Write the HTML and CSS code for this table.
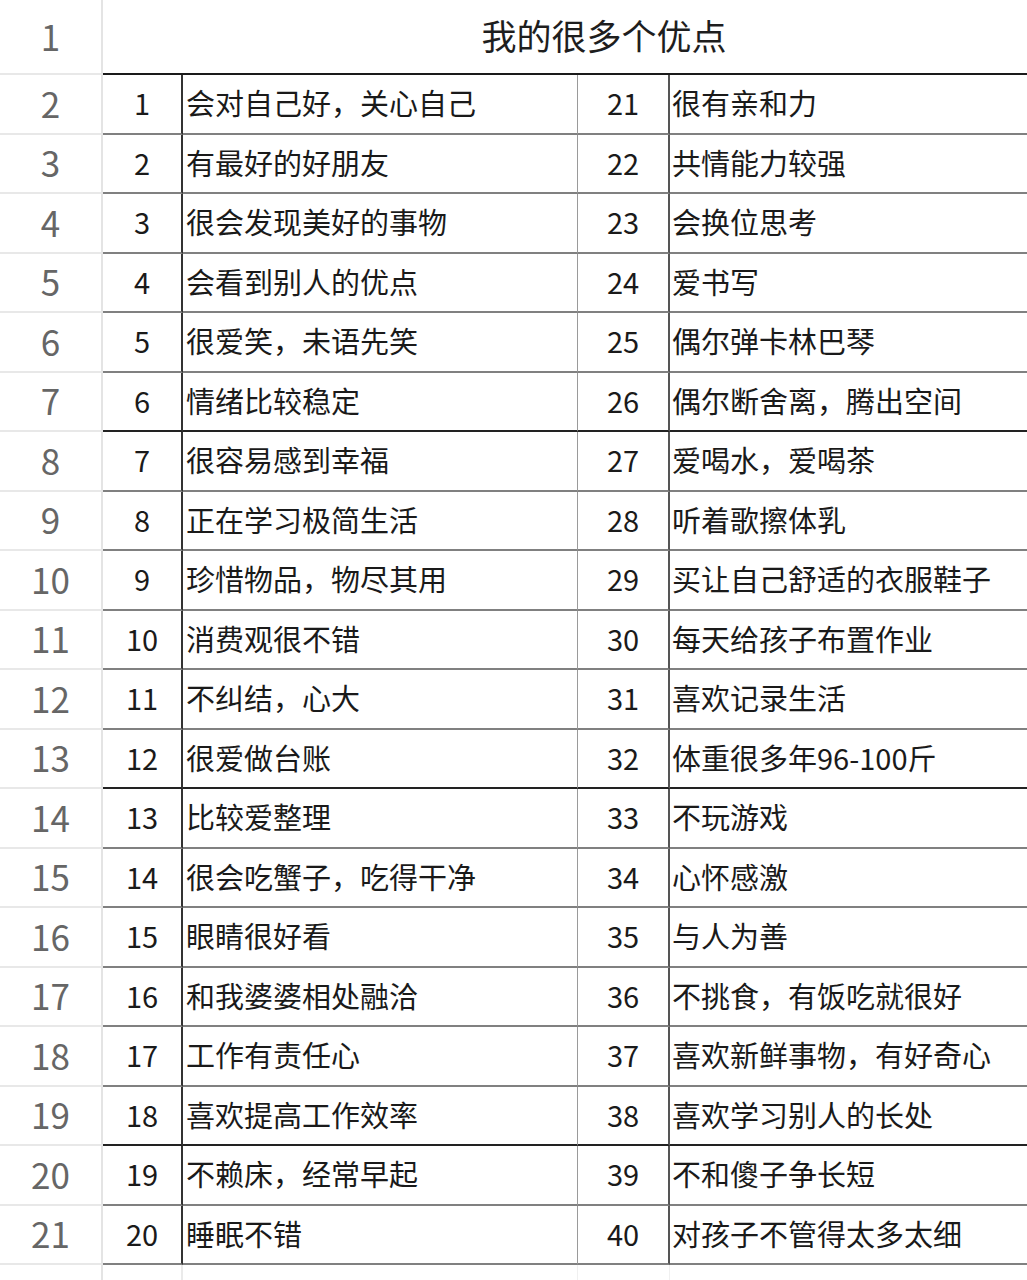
FILE: index.html
```html
<!DOCTYPE html>
<html lang="zh-CN">
<head>
<meta charset="utf-8">
<title>我的很多个优点</title>
<link rel="stylesheet" href="styles.css">
</head>
<body>
<div class="sheet">
  <div class="row head">
    <div class="rn">1</div>
    <div class="title">我的很多个优点</div>
  </div>
  <div class="row"><div class="rn">2</div><div class="c a">1</div><div class="c b">会对自己好，关心自己</div><div class="c n2">21</div><div class="c d">很有亲和力</div></div>
  <div class="row"><div class="rn">3</div><div class="c a">2</div><div class="c b">有最好的好朋友</div><div class="c n2">22</div><div class="c d">共情能力较强</div></div>
  <div class="row"><div class="rn">4</div><div class="c a">3</div><div class="c b">很会发现美好的事物</div><div class="c n2">23</div><div class="c d">会换位思考</div></div>
  <div class="row"><div class="rn">5</div><div class="c a">4</div><div class="c b">会看到别人的优点</div><div class="c n2">24</div><div class="c d">爱书写</div></div>
  <div class="row"><div class="rn">6</div><div class="c a">5</div><div class="c b">很爱笑，未语先笑</div><div class="c n2">25</div><div class="c d">偶尔弹卡林巴琴</div></div>
  <div class="row strong"><div class="rn">7</div><div class="c a">6</div><div class="c b">情绪比较稳定</div><div class="c n2">26</div><div class="c d">偶尔断舍离，腾出空间</div></div>
  <div class="row"><div class="rn">8</div><div class="c a">7</div><div class="c b">很容易感到幸福</div><div class="c n2">27</div><div class="c d">爱喝水，爱喝茶</div></div>
  <div class="row"><div class="rn">9</div><div class="c a">8</div><div class="c b">正在学习极简生活</div><div class="c n2">28</div><div class="c d">听着歌擦体乳</div></div>
  <div class="row"><div class="rn">10</div><div class="c a">9</div><div class="c b">珍惜物品，物尽其用</div><div class="c n2">29</div><div class="c d">买让自己舒适的衣服鞋子</div></div>
  <div class="row"><div class="rn">11</div><div class="c a">10</div><div class="c b">消费观很不错</div><div class="c n2">30</div><div class="c d">每天给孩子布置作业</div></div>
  <div class="row"><div class="rn">12</div><div class="c a">11</div><div class="c b">不纠结，心大</div><div class="c n2">31</div><div class="c d">喜欢记录生活</div></div>
  <div class="row strong"><div class="rn">13</div><div class="c a">12</div><div class="c b">很爱做台账</div><div class="c n2">32</div><div class="c d">体重很多年96-100斤</div></div>
  <div class="row"><div class="rn">14</div><div class="c a">13</div><div class="c b">比较爱整理</div><div class="c n2">33</div><div class="c d">不玩游戏</div></div>
  <div class="row"><div class="rn">15</div><div class="c a">14</div><div class="c b">很会吃蟹子，吃得干净</div><div class="c n2">34</div><div class="c d">心怀感激</div></div>
  <div class="row"><div class="rn">16</div><div class="c a">15</div><div class="c b">眼睛很好看</div><div class="c n2">35</div><div class="c d">与人为善</div></div>
  <div class="row"><div class="rn">17</div><div class="c a">16</div><div class="c b">和我婆婆相处融洽</div><div class="c n2">36</div><div class="c d">不挑食，有饭吃就很好</div></div>
  <div class="row"><div class="rn">18</div><div class="c a">17</div><div class="c b">工作有责任心</div><div class="c n2">37</div><div class="c d">喜欢新鲜事物，有好奇心</div></div>
  <div class="row strong"><div class="rn">19</div><div class="c a">18</div><div class="c b">喜欢提高工作效率</div><div class="c n2">38</div><div class="c d">喜欢学习别人的长处</div></div>
  <div class="row"><div class="rn">20</div><div class="c a">19</div><div class="c b">不赖床，经常早起</div><div class="c n2">39</div><div class="c d">不和傻子争长短</div></div>
  <div class="row"><div class="rn">21</div><div class="c a">20</div><div class="c b">睡眠不错</div><div class="c n2">40</div><div class="c d">对孩子不管得太多太细</div></div>
  <div class="row empty"><div class="rn"></div><div class="e a"></div><div class="e b"></div><div class="e n2"></div><div class="e d"></div></div>
</div>
</body>
</html>
```

FILE: styles.css
```css
* { box-sizing: border-box; }
html, body { margin: 0; padding: 0; background: #fff; }
body {
  font-family: "Noto Sans CJK SC", "Noto Sans", sans-serif;
  color: #1a1a1a;
  width: 1027px;
  height: 1280px;
  overflow: hidden;
}
.sheet { display: flex; flex-direction: column; }
.row {
  display: grid;
  grid-template-columns: 103px 80px 395px 92px 357px;
  height: 59.5px;
}
.row.head { height: 75px; grid-template-columns: 103px 924px; }
.rn {
  display: flex;
  align-items: center;
  justify-content: center;
  font-size: 35px;
  font-weight: 400;
  color: #666;
  border-right: 2px solid #e4e4e4;
  border-bottom: 2px solid #e8e8e8;
  padding-bottom: 3px;
}
.title {
  display: flex;
  align-items: center;
  justify-content: center;
  padding-left: 78px;
  padding-bottom: 4px;
  font-size: 35px;
  color: #1e1e1e;
  border-bottom: 2px solid #1a1a1a;
}
.c {
  display: flex;
  align-items: center;
  font-size: 29px;
  border-bottom: 2px solid #808080;
  white-space: nowrap;
  padding-bottom: 3px;
}
.row.strong .c { border-bottom-color: #222; }
.a { justify-content: center; border-right: 2px solid #333; }
.b { padding-left: 3px; border-right: 1px solid #9a9a9a; }
.n2 { justify-content: center; border-right: 2px solid #555; }
.d { padding-left: 2px; }
.row.empty .rn { border-bottom: none; }
.e.a { border-right: 2px solid #eaeaea; }
.e.b { border-right: 1px solid #f0f0f0; }
.e.n2 { border-right: 1px solid #f0f0f0; }
```
